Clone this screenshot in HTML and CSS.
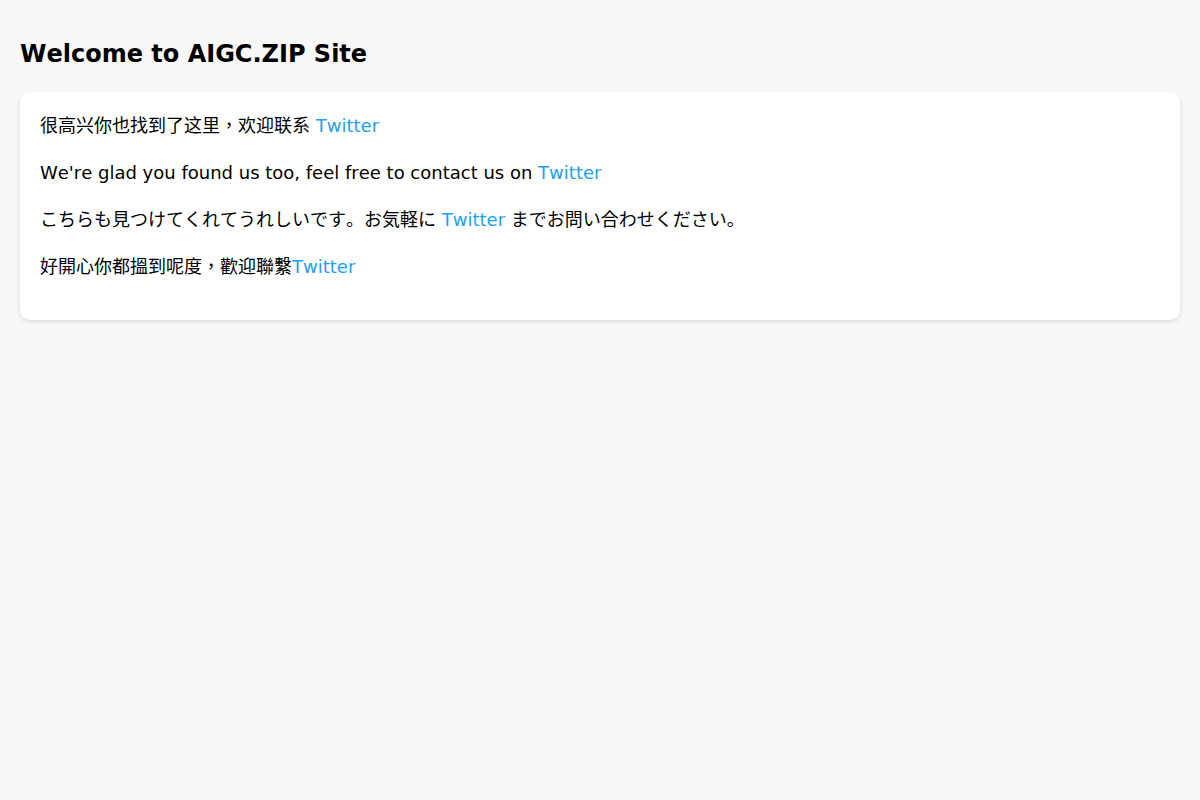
FILE: index.html
```html
<!DOCTYPE html>
<html lang="zh">
<head>
<meta charset="utf-8">
<title>AIGC.ZIP</title>
<link rel="stylesheet" href="styles.css">
</head>
<body>
<h1 class="title">Welcome to AIGC.ZIP Site</h1>
<div class="card">
  <p class="msg zh">很高兴你也找到了这里<span class="punct" lang="zh-TW">，</span>欢迎联系 <a href="#">Twitter</a></p>
  <p class="msg">We're glad you found us too, feel free to contact us on <a href="#">Twitter</a></p>
  <p class="msg ja" lang="ja">こちらも見つけてくれてうれしいです。お気軽に <a href="#">Twitter</a> までお問い合わせください。</p>
  <p class="msg zh">好開心你都搵到呢度<span class="punct" lang="zh-TW">，</span>歡迎聯繫<a href="#">Twitter</a></p>
</div>
</body>
</html>
```
FILE: styles.css
```css
html, body {
  margin: 0;
  background: #f8f8f8;
}
body {
  padding: 20px;
  font-family: "DejaVu Sans", "Noto Sans CJK SC", sans-serif;
  font-kerning: none;
  color: #000;
  line-height: 1.6;
}
.title {
  font-size: 24px;
  font-weight: bold;
  margin: 15px 0 19px;
}
.card {
  background: #fff;
  border-radius: 10px;
  box-shadow: 0 2px 5px rgba(0, 0, 0, 0.12);
  padding: 20px 20px 20px;
}
.msg {
  font-size: 18px;
  margin: 0 0 18px;
}
.msg.zh {
  font-family: "DejaVu Sans", "Noto Sans CJK SC", sans-serif;
}
.msg.ja {
  font-family: "DejaVu Sans", "Noto Sans CJK JP", sans-serif;
}
.punct {
  font-family: "Noto Sans CJK TC", sans-serif;
  line-height: 1;
}
.msg a {
  color: #1da1f2;
  text-decoration: none;
}
```
